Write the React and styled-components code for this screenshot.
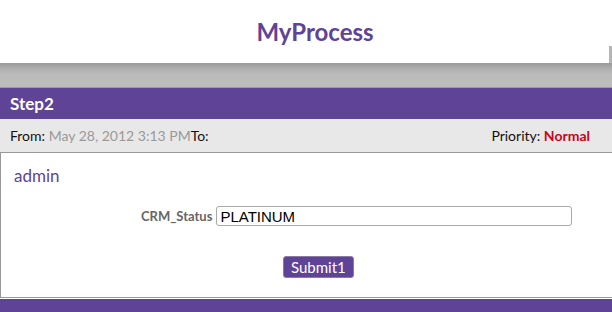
import React from 'react';
import styled, { createGlobalStyle } from 'styled-components';

const GlobalStyle = createGlobalStyle`
  body {
    margin: 0;
    background: #fff;
    font-family: "Trebuchet MS", "Lato", "DejaVu Sans", sans-serif;
  }
`;

const Page = styled.div`
  width: 612px;
  height: 312px;
  overflow: hidden;
  display: flex;
  flex-direction: column;
`;

const Header = styled.div`
  position: relative;
  height: 63px;
  display: flex;
  align-items: center;
  justify-content: center;
  padding-left: 18px;
  box-sizing: border-box;
  background: #fff;

  &::after {
    content: '';
    position: absolute;
    right: 0;
    bottom: 0;
    width: 3px;
    height: 17px;
    background: #b5b5b5;
  }
`;

const Title = styled.h1`
  margin: 0;
  font-size: 24px;
  font-weight: bold;
  color: #5f4397;
`;

const ShadowBand = styled.div`
  height: 24px;
  background: linear-gradient(#999 0%, #b0b0b0 25%, #bcbcbc 50%, #bcbcbc 100%);
  border-bottom: 1px solid #9c9c9c;
`;

const StepBar = styled.div`
  height: 31px;
  background: #5f4397;
  color: #fff;
  font-size: 17px;
  font-weight: bold;
  display: flex;
  align-items: center;
  padding: 0 10px;
`;

const InfoBar = styled.div`
  height: 33px;
  background: #e8e8e8;
  border-bottom: 1px solid #999;
  display: flex;
  align-items: center;
  justify-content: space-between;
  padding: 0 22px 0 10px;
  font-size: 14px;
  color: #111;
`;

const Value = styled.span`
  color: ${p => p.red ? '#d0021b' : '#999'};
  font-weight: ${p => p.red ? 'bold' : 'normal'};
`;

const Body = styled.div`
  flex: 1;
  background: #fff;
  border-left: 1px solid #999;
  border-bottom: 1px solid #999;
  display: flex;
  flex-direction: column;
`;

const User = styled.div`
  color: #5f4397;
  font-size: 17px;
  padding: 12px 0 0 13px;
  height: 23px;
`;

const FieldRow = styled.div`
  display: flex;
  align-items: center;
  margin-top: 18px;
  padding-left: 140px;
`;

const Label = styled.label`
  font-size: 13px;
  font-weight: bold;
  color: #666;
  margin-right: 4px;
`;

const Input = styled.input`
  width: 356px;
  height: 20px;
  box-sizing: border-box;
  border: 1px solid #a9a9a9;
  border-radius: 3px;
  padding: 0 3px;
  font-family: "Liberation Sans", Arial, sans-serif;
  font-size: 15px;
  color: #000;
  outline: none;
`;

const ButtonRow = styled.div`
  display: flex;
  padding-left: 282px;
  margin-top: 30px;
`;

const Button = styled.button`
  height: 22px;
  padding: 0 7px;
  background: #5f4397;
  border: 1px solid #8a7aa8;
  border-radius: 3px;
  color: #fff;
  font-family: inherit;
  font-size: 15px;
`;

const Footer = styled.div`
  height: 13px;
  background: #5f4397;
  border-top: 1px solid #fff;
`;

export default function App() {
  return (
    <Page>
      <GlobalStyle />
      <Header>
        <Title>MyProcess</Title>
      </Header>
      <ShadowBand />
      <StepBar>Step2</StepBar>
      <InfoBar>
        <span>From: <Value>May 28, 2012 3:13 PM</Value>To:</span>
        <span>Priority: <Value red>Normal</Value></span>
      </InfoBar>
      <Body>
        <User>admin</User>
        <FieldRow>
          <Label>CRM_Status</Label>
          <Input defaultValue="PLATINUM" />
        </FieldRow>
        <ButtonRow>
          <Button>Submit1</Button>
        </ButtonRow>
      </Body>
      <Footer />
    </Page>
  );
}
